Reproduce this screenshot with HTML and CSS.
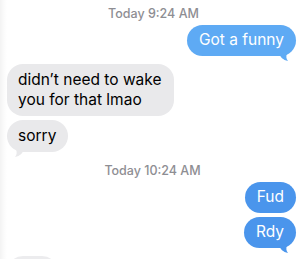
FILE: index.html
```html
<!DOCTYPE html>
<html>
<head>
<meta charset="utf-8">
<link rel="stylesheet" href="styles.css">
</head>
<body>
<div class="thread">
  <div class="stamp">Today 9:24 AM</div>
  <div class="row out">
    <div class="bubble sent light">Got a funny
      <svg class="tail tail-out" width="14" height="10" viewBox="0 0 14 10"><path d="M0 0 C1 4 4 7 9 8 C7 6 7 3 8 0 Z"/></svg>
    </div>
  </div>
  <div class="row in gap">
    <div class="bubble recv">didn’t need to wake<br>you for that lmao</div>
  </div>
  <div class="row in">
    <div class="bubble recv">sorry
      <svg class="tail tail-in" width="14" height="10" viewBox="0 0 14 10"><path d="M14 0 C13 4 10 7 5 8 C7 6 7 3 6 0 Z"/></svg>
    </div>
  </div>
  <div class="stamp second">Today 10:24 AM</div>
  <div class="row out">
    <div class="bubble sent">Fud</div>
  </div>
  <div class="row out">
    <div class="bubble sent">Rdy
      <svg class="tail tail-out" width="14" height="10" viewBox="0 0 14 10"><path d="M0 0 C1 4 4 7 9 8 C7 6 7 3 8 0 Z"/></svg>
    </div>
  </div>
  <div class="row in gap">
    <div class="bubble recv partial"></div>
  </div>
</div>
</body>
</html>
```

FILE: styles.css
```css
html, body {
  margin: 0;
  padding: 0;
}
body {
  width: 300px;
  height: 259px;
  overflow: hidden;
  background: linear-gradient(to right, #f3f3f3 0px, #fbfbfb 4px, #ffffff 7px);
  font-family: Inter, "Noto Sans", sans-serif;
  -webkit-font-smoothing: antialiased;
}
.thread {
  display: flex;
  flex-direction: column;
  gap: 4px;
  padding: 6px 4px 0 7px;
}
.stamp {
  text-align: center;
  font-size: 12.5px;
  line-height: 15px;
  font-weight: 500;
  color: #8e8e93;
  margin-bottom: 0;
  padding-left: 4px;
}
.stamp.second {
  margin-top: 7px;
  margin-bottom: 0;
  padding-left: 2px;
}
.row {
  display: flex;
}
.row.out {
  justify-content: flex-end;
}
.row.in {
  justify-content: flex-start;
}
.row.gap {
  margin-top: 4px;
}
.bubble {
  position: relative;
  font-size: 15.5px;
  line-height: 20px;
  padding: 5px 12px 6px;
  border-radius: 16px;
}
.sent {
  background: #4a95ec;
  color: #ffffff;
}
.sent.light {
  background: #5eaaf4;
}
.recv {
  background: #e9e9eb;
  color: #000000;
  padding: 6px 12px 6px 11px;
}
.recv.partial {
  width: 28px;
  height: 20px;
  background: #ececee;
}
.tail {
  position: absolute;
  bottom: -7px;
}
.tail-out {
  right: 3px;
  fill: #4a95ec;
}
.light .tail-out {
  fill: #5eaaf4;
}
.tail-in {
  left: 3px;
  fill: #e9e9eb;
}
```
